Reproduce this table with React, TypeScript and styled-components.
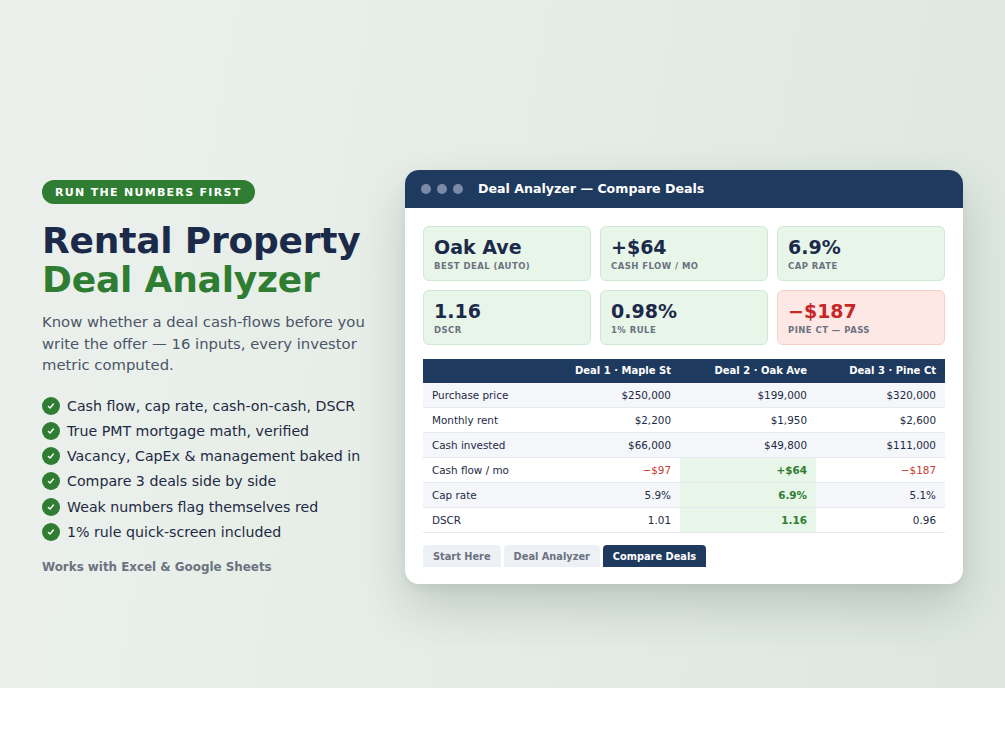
import React from 'react';
import styled, { createGlobalStyle } from 'styled-components';

const GlobalStyle = createGlobalStyle`
  * { box-sizing: border-box; }
  body {
    margin: 0;
    background: #ffffff;
    font-family: "DejaVu Sans", "Liberation Sans", sans-serif;
  }
`;

const Hero = styled.section`
  height: 688px;
  padding: 170px 42px 104px;
  display: flex;
  align-items: center;
  gap: 33px;
  background: linear-gradient(100deg, #ecf0ed 0%, #e6eee7 40%, #dde7df 100%);
`;

const Intro = styled.div`
  width: 330px;
  flex-shrink: 0;
`;

const Badge = styled.span`
  display: inline-flex;
  align-items: center;
  height: 24px;
  padding: 0 13px;
  border-radius: 12px;
  background: #2e7d32;
  color: #ffffff;
  font-size: 11px;
  font-weight: 700;
  letter-spacing: 1.3px;
`;

const Title = styled.h1`
  margin: 17px 0 0;
  font-size: 36px;
  line-height: 39px;
  font-weight: 700;
  color: #1c2a4a;
  letter-spacing: -0.2px;
`;

const Accent = styled.span`
  display: block;
  color: #2e7d32;
`;

const Lead = styled.p`
  margin: 12px 0 0;
  font-size: 14.8px;
  line-height: 21.5px;
  color: #4b5567;
`;

const Checks = styled.ul`
  list-style: none;
  margin: 20px 0 0;
  padding: 0;
  display: flex;
  flex-direction: column;
  gap: 5.3px;
`;

const CheckItem = styled.li`
  display: flex;
  align-items: center;
  gap: 7px;
  height: 20px;
  font-size: 14.2px;
  color: #1e2a44;
  white-space: nowrap;
`;

const Footnote = styled.p`
  margin: 18px 0 0;
  font-size: 11.9px;
  font-weight: 700;
  color: #6b7280;
`;

const Window = styled.div`
  width: 558px;
  flex-shrink: 0;
  border-radius: 14px;
  background: #ffffff;
  overflow: hidden;
  box-shadow: 0 22px 48px rgba(40, 60, 50, 0.2), 0 4px 10px rgba(40, 60, 50, 0.06);
`;

const TitleBar = styled.div`
  height: 38px;
  display: flex;
  align-items: center;
  padding: 0 16px;
  background: #1f3a5f;
  color: #ffffff;
  font-size: 12.6px;
  font-weight: 700;
`;

const Dots = styled.div`
  display: flex;
  gap: 6px;
  margin-right: 15px;
`;

const Dot = styled.span`
  width: 10px;
  height: 10px;
  border-radius: 50%;
  background: #7b8ba6;
`;

const Body = styled.div`
  padding: 18px 18px 17px;
`;

const Stats = styled.div`
  display: grid;
  grid-template-columns: repeat(3, 1fr);
  gap: 9px;
`;

const Stat = styled.div<{ $bad?: boolean }>`
  height: 55px;
  padding: 9px 10px 0;
  border-radius: 6px;
  background: ${(p) => (p.$bad ? '#fde8e6' : '#e8f5e9')};
  border: 1px solid ${(p) => (p.$bad ? '#f7cfca' : '#cfe8d1')};
`;

const StatValue = styled.div<{ $bad?: boolean }>`
  font-size: 19px;
  line-height: 22px;
  font-weight: 700;
  color: ${(p) => (p.$bad ? '#c62828' : '#1c2a4a')};
`;

const StatLabel = styled.div`
  margin-top: 3px;
  font-size: 8.5px;
  font-weight: 700;
  letter-spacing: 0.45px;
  color: #6b7280;
  text-transform: uppercase;
`;

const Table = styled.table`
  width: 100%;
  margin-top: 14px;
  border-collapse: collapse;
  table-layout: fixed;
  font-size: 10.4px;
`;

const Head = styled.th`
  height: 24px;
  padding: 0 9px;
  background: #1f3a5f;
  color: #ffffff;
  font-weight: 700;
  font-size: 10px;
  text-align: right;
`;

const Row = styled.tr<{ $shade?: boolean }>`
  background: ${(p) => (p.$shade ? '#f4f6fa' : '#ffffff')};
`;

const Cell = styled.td<{ $tone?: 'bad' | 'best'; $label?: boolean }>`
  height: 25px;
  padding: 0 9px;
  border-bottom: 1px solid #e6e9ef;
  text-align: ${(p) => (p.$label ? 'left' : 'right')};
  color: ${(p) => (p.$tone === 'bad' ? '#c8402f' : p.$tone === 'best' ? '#2e7d32' : '#1e2a44')};
  font-weight: ${(p) => (p.$tone === 'best' ? 700 : 400)};
  background: ${(p) => (p.$tone === 'best' ? '#e8f5e9' : 'transparent')};
`;

const Tabs = styled.div`
  display: flex;
  gap: 3px;
  margin-top: 12px;
`;

const Tab = styled.div<{ $active?: boolean }>`
  height: 22px;
  padding: 0 10px;
  display: flex;
  align-items: center;
  border-radius: 4px 4px 0 0;
  font-size: 9.8px;
  font-weight: 700;
  background: ${(p) => (p.$active ? '#1f3a5f' : '#edf0f5')};
  color: ${(p) => (p.$active ? '#ffffff' : '#6b7280')};
`;

function CheckIcon() {
  return (
    <svg width="18" height="18" viewBox="0 0 18 18">
      <circle cx="9" cy="9" r="9" fill="#2e7d32" />
      <path d="M6.4 9.4 L8.1 11 L11.4 7" fill="none" stroke="#ffffff" strokeWidth="1.4" strokeLinecap="round" strokeLinejoin="round" />
    </svg>
  );
}

const features = [
  'Cash flow, cap rate, cash-on-cash, DSCR',
  'True PMT mortgage math, verified',
  'Vacancy, CapEx & management baked in',
  'Compare 3 deals side by side',
  'Weak numbers flag themselves red',
  '1% rule quick-screen included',
];

type Tone = 'bad' | 'best' | undefined;

const rows: { label: string; values: [string, Tone][] }[] = [
  { label: 'Purchase price', values: [['$250,000', undefined], ['$199,000', undefined], ['$320,000', undefined]] },
  { label: 'Monthly rent', values: [['$2,200', undefined], ['$1,950', undefined], ['$2,600', undefined]] },
  { label: 'Cash invested', values: [['$66,000', undefined], ['$49,800', undefined], ['$111,000', undefined]] },
  { label: 'Cash flow / mo', values: [['\u2212$97', 'bad'], ['+$64', 'best'], ['\u2212$187', 'bad']] },
  { label: 'Cap rate', values: [['5.9%', undefined], ['6.9%', 'best'], ['5.1%', undefined]] },
  { label: 'DSCR', values: [['1.01', undefined], ['1.16', 'best'], ['0.96', undefined]] },
];

const stats = [
  { value: 'Oak Ave', label: 'Best deal (auto)' },
  { value: '+$64', label: 'Cash flow / mo' },
  { value: '6.9%', label: 'Cap rate' },
  { value: '1.16', label: 'DSCR' },
  { value: '0.98%', label: '1% rule' },
  { value: '\u2212$187', label: 'Pine Ct \u2014 pass', bad: true },
];

export default function App() {
  return (
    <>
      <GlobalStyle />
      <Hero>
        <Intro>
          <Badge>RUN THE NUMBERS FIRST</Badge>
          <Title>
            Rental Property
            <Accent>Deal Analyzer</Accent>
          </Title>
          <Lead>
            Know whether a deal cash-flows before you write the offer — 16 inputs, every investor metric computed.
          </Lead>
          <Checks>
            {features.map((f) => (
              <CheckItem key={f}>
                <CheckIcon />
                {f}
              </CheckItem>
            ))}
          </Checks>
          <Footnote>Works with Excel &amp; Google Sheets</Footnote>
        </Intro>

        <Window>
          <TitleBar>
            <Dots>
              <Dot />
              <Dot />
              <Dot />
            </Dots>
            Deal Analyzer — Compare Deals
          </TitleBar>
          <Body>
            <Stats>
              {stats.map((s) => (
                <Stat key={s.label} $bad={s.bad}>
                  <StatValue $bad={s.bad}>{s.value}</StatValue>
                  <StatLabel>{s.label}</StatLabel>
                </Stat>
              ))}
            </Stats>
            <Table>
              <colgroup>
                <col style={{ width: 120 }} />
                <col style={{ width: 137 }} />
                <col style={{ width: 136 }} />
                <col style={{ width: 129 }} />
              </colgroup>
              <thead>
                <tr>
                  <Head />
                  <Head>Deal 1 · Maple St</Head>
                  <Head>Deal 2 · Oak Ave</Head>
                  <Head>Deal 3 · Pine Ct</Head>
                </tr>
              </thead>
              <tbody>
                {rows.map((r, i) => (
                  <Row key={r.label} $shade={i % 2 === 0}>
                    <Cell $label>{r.label}</Cell>
                    {r.values.map(([v, tone], j) => (
                      <Cell key={j} $tone={tone}>
                        {v}
                      </Cell>
                    ))}
                  </Row>
                ))}
              </tbody>
            </Table>
            <Tabs>
              <Tab>Start Here</Tab>
              <Tab>Deal Analyzer</Tab>
              <Tab $active>Compare Deals</Tab>
            </Tabs>
          </Body>
        </Window>
      </Hero>
    </>
  );
}
